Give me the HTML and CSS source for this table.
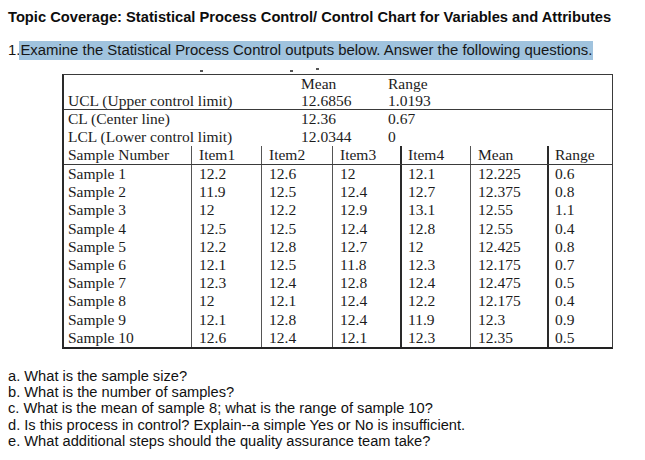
FILE: index.html
```html
<!DOCTYPE html>
<html>
<head>
<meta charset="utf-8">
<link rel="stylesheet" href="styles.css">
</head>
<body>
<div class="page">
  <h1 class="title">Topic Coverage: Statistical Process Control/ Control Chart for Variables and Attributes</h1>
  <p class="intro">1.<span class="hl">Examine the Statistical Process Control outputs below. Answer the following questions.</span></p>
  <div class="ticks"><span class="tick t1"></span><span class="tick t2"></span><span class="tick t3"></span></div>
  <div class="sheet">
    <div class="srow short"><span></span><span>Mean</span><span>Range</span></div>
    <div class="srow short ruled"><span>UCL (Upper control limit)</span><span>12.6856</span><span>1.0193</span></div>
    <div class="srow"><span>CL (Center line)</span><span>12.36</span><span>0.67</span></div>
    <div class="srow"><span>LCL (Lower control limit)</span><span>12.0344</span><span>0</span></div>
    <div class="drow head"><span>Sample Number</span><span>Item1</span><span>Item2</span><span>Item3</span><span class="thick">Item4</span><span>Mean</span><span class="thick">Range</span></div>
    <div class="drow"><span>Sample 1</span><span>12.2</span><span>12.6</span><span>12</span><span class="thick">12.1</span><span>12.225</span><span class="thick">0.6</span></div>
    <div class="drow"><span>Sample 2</span><span>11.9</span><span>12.5</span><span>12.4</span><span class="thick">12.7</span><span>12.375</span><span class="thick">0.8</span></div>
    <div class="drow"><span>Sample 3</span><span>12</span><span>12.2</span><span>12.9</span><span class="thick">13.1</span><span>12.55</span><span class="thick">1.1</span></div>
    <div class="drow"><span>Sample 4</span><span>12.5</span><span>12.5</span><span>12.4</span><span class="thick">12.8</span><span>12.55</span><span class="thick">0.4</span></div>
    <div class="drow"><span>Sample 5</span><span>12.2</span><span>12.8</span><span>12.7</span><span class="thick">12</span><span>12.425</span><span class="thick">0.8</span></div>
    <div class="drow"><span>Sample 6</span><span>12.1</span><span>12.5</span><span>11.8</span><span class="thick">12.3</span><span>12.175</span><span class="thick">0.7</span></div>
    <div class="drow"><span>Sample 7</span><span>12.3</span><span>12.4</span><span>12.8</span><span class="thick">12.4</span><span>12.475</span><span class="thick">0.5</span></div>
    <div class="drow"><span>Sample 8</span><span>12</span><span>12.1</span><span>12.4</span><span class="thick">12.2</span><span>12.175</span><span class="thick">0.4</span></div>
    <div class="drow"><span>Sample 9</span><span>12.1</span><span>12.8</span><span>12.4</span><span class="thick">11.9</span><span>12.3</span><span class="thick">0.9</span></div>
    <div class="drow"><span>Sample 10</span><span>12.6</span><span>12.4</span><span>12.1</span><span class="thick">12.3</span><span>12.35</span><span class="thick">0.5</span></div>
  </div>
  <div class="questions">
    <p>a. What is the sample size?</p>
    <p>b. What is the number of samples?</p>
    <p>c. What is the mean of sample 8; what is the range of sample 10?</p>
    <p>d. Is this process in control? Explain--a simple Yes or No is insufficient.</p>
    <p>e. What additional steps should the quality assurance team take?</p>
  </div>
</div>
</body>
</html>
```

FILE: styles.css
```css
html, body {
  margin: 0;
  padding: 0;
  background: #ffffff;
}

.page {
  padding: 9px 8px 0 8px;
  font-family: "Liberation Sans", Arial, sans-serif;
  color: #111111;
}

.title {
  margin: 0;
  font-size: 14.7px;
  line-height: 16px;
  font-weight: bold;
  color: #0d0d0d;
  white-space: nowrap;
}

.intro {
  margin: 16px 0 0 0;
  font-size: 14.9px;
  line-height: 19px;
  height: 19px;
  color: #161616;
  white-space: nowrap;
}

.hl {
  display: inline-block;
  background: #a0c3de;
  padding: 0 1px 0 1px;
  margin-left: -1px;
}

.ticks {
  height: 14px;
  display: flex;
  align-items: flex-end;
}

.tick {
  display: block;
  width: 3px;
  height: 2px;
  background: #555;
  margin-bottom: 2px;
}

.t1 { margin-left: 192px; }
.t2 { margin-left: 87px; }
.t3 { margin-left: 23px; margin-bottom: 4px; }

.sheet {
  margin-left: 54px;
  width: 548px;
  border-left: 2px solid #2a2a2a;
  border-right: 1px solid #3a3a3a;
  border-top: 1px solid #3a3a3a;
  border-bottom: 2px solid #222222;
  font-family: "Liberation Serif", "Times New Roman", serif;
  font-size: 15.5px;
  color: #1c1c1c;
}

.srow {
  display: grid;
  grid-template-columns: 237px 87px 1fr;
  height: 18px;
  line-height: 18px;
}

.srow.short {
  height: 17px;
  line-height: 17px;
}

.srow.ruled {
  border-bottom: 1px solid #3a3a3a;
}

.srow span:first-child {
  padding-left: 4px;
}

.drow {
  display: grid;
  grid-template-columns: 127px 70px 71px 68px 70px 77px 65px;
  height: 18.2px;
  line-height: 18.2px;
}

.drow.head {
  height: 18px;
  line-height: 18px;
  border-bottom: 1px solid #3a3a3a;
}

.drow span {
  border-left: 1px solid #555555;
  padding-left: 7px;
  white-space: nowrap;
  overflow: hidden;
}

.drow span:first-child {
  border-left: none;
  padding-left: 4px;
}

.drow span.thick {
  border-left: 2px solid #2a2a2a;
  padding-left: 6px;
}

.questions {
  margin-top: 19px;
  font-size: 14.65px;
  line-height: 16.25px;
  color: #111111;
}

.questions p {
  margin: 0;
  white-space: nowrap;
}
```
